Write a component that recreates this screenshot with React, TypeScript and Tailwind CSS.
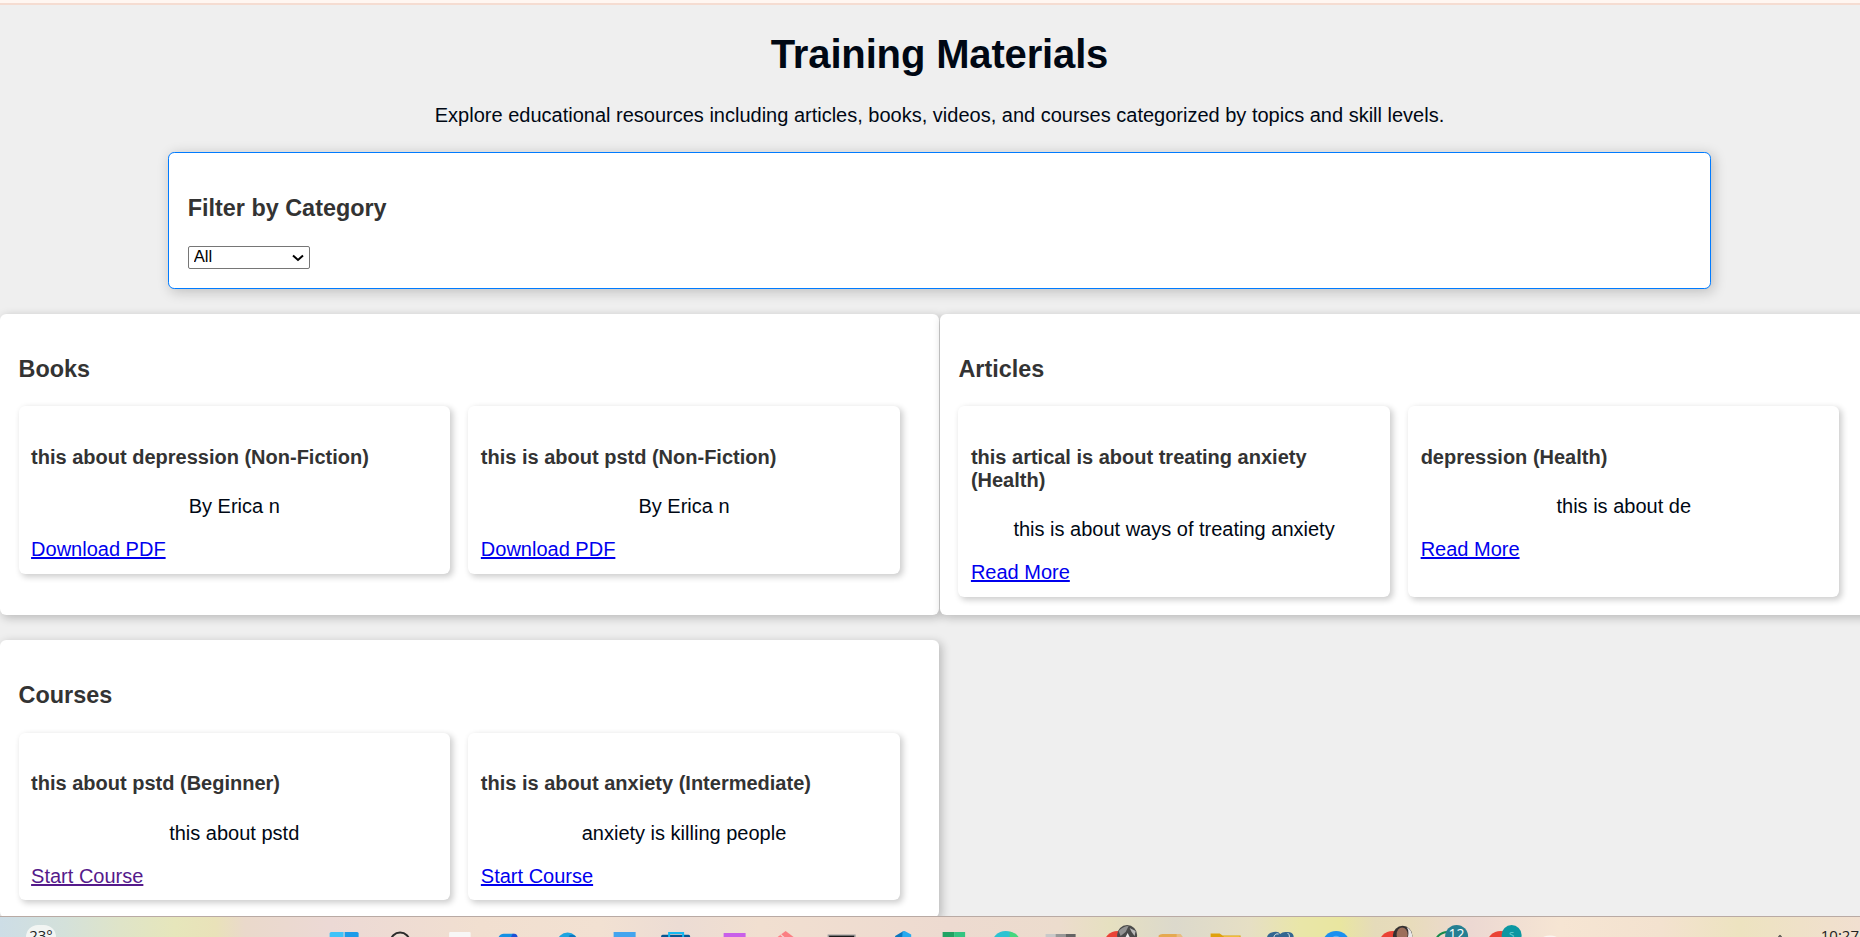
import React from "react";

type Item = { title: string; text: string; link: string; visited?: boolean };

const books: Item[] = [
  { title: "this about depression (Non-Fiction)", text: "By Erica n", link: "Download PDF" },
  { title: "this is about pstd (Non-Fiction)", text: "By Erica n", link: "Download PDF" },
];

const articles: Item[] = [
  { title: "this artical is about treating anxiety (Health)", text: "this is about ways of treating anxiety", link: "Read More" },
  { title: "depression (Health)", text: "this is about de", link: "Read More" },
];

const courses: Item[] = [
  { title: "this about pstd (Beginner)", text: "this about pstd", link: "Start Course", visited: true },
  { title: "this is about anxiety (Intermediate)", text: "anxiety is killing people", link: "Start Course" },
];

function Card({ item }: { item: Item }) {
  return (
    <article className="w-[431.25px] shrink-0 rounded-[6.25px] bg-white p-[12.5px] shadow-[2.5px_2.5px_6.25px_rgba(0,0,0,0.2)]">
      <h4 className="mt-[27px] mb-[26.6px] leading-[23px] font-bold text-[#333]">{item.title}</h4>
      <p className="mb-5 text-center leading-[23px]">{item.text}</p>
      <a
        href="#"
        className={
          item.visited
            ? "block w-fit leading-[23px] text-[#551a8b] underline"
            : "block w-fit leading-[23px] text-[#0000ee] underline"
        }
      >
        {item.link}
      </a>
    </article>
  );
}

function Section({ title, items }: { title: string; items: Item[] }) {
  return (
    <section className="rounded-[6.25px] bg-white px-[18.6px] pt-[18.75px] pb-[18.3px] shadow-[2.5px_2.5px_10px_rgba(0,0,0,0.22)]">
      <h3 className="my-[23.4px] text-[23.4px] leading-[27px] font-bold text-[#333]">{title}</h3>
      <div className="flex gap-[18.5px]">
        {items.map((item) => (
          <Card key={item.title} item={item} />
        ))}
      </div>
    </section>
  );
}

/* Taskbar icons, drawn around the centre of their slot. */
const icons: React.ReactNode[] = [
  <g key="start">
    <path d="M-14 17.5Q-14 16-12.5 16H0V32H-14Z" fill="#40c3f8" />
    <path d="M1 16H13.500Q15 16 15 17.500V32H1Z" fill="#1c9be9" />
  </g>,
  <circle key="search" cx="0.500" cy="26" r="9.500" fill="none" stroke="#2b2b2b" strokeWidth="2" />,
  <rect key="task" x="-5.500" y="16" width="21.500" height="16" rx="1" fill="#f8f7f6" />,
  <g key="copilot">
    <path d="M-11 21Q-9 17.700-6 17.700H4V24H-11Z" fill="#1590e4" />
    <path d="M0 24L3 17.700H5Q8 17.700 8.500 24Z" fill="#1d4fd6" />
  </g>,
  <g key="edge">
    <circle cx="3" cy="27" r="10.500" fill="#1ea4e0" />
    <path d="M4 20Q9 17 12 22H6Z" fill="#0c76bf" />
  </g>,
  <rect key="notes" x="-7" y="16" width="22" height="16" fill="#43a4ee" />,
  <g key="store">
    <rect x="-14.500" y="18.800" width="29" height="14" rx="1.500" fill="#075591" />
    <path d="M-6.500 22V17H7.500V22" fill="none" stroke="#16b9f2" strokeWidth="2" />
  </g>,
  <rect key="vs" x="-7" y="17" width="22" height="16" rx="0.500" fill="#c95fe9" />,
  <g key="snip">
    <path d="M0 15L8 21H-8Z" fill="#fb7f83" />
    <path d="M-5 18.500L-1 22" stroke="#f6d6ce" strokeWidth="1.300" />
  </g>,
  <g key="terminal">
    <rect x="-14" y="18.500" width="28" height="8" fill="#9b9b9b" />
    <rect x="-12.500" y="19.700" width="25" height="8" fill="#1b1b1b" />
  </g>,
  <g key="code">
    <path d="M-1.500 20L7 15V32H-1.500Z" fill="#0b76bd" />
    <path d="M6 15.400L8 15L14.600 18.500V32H5Z" fill="#27aaf0" />
  </g>,
  <g key="sheets">
    <rect x="-9" y="16" width="11.500" height="16" fill="#21a363" />
    <rect x="2.500" y="16" width="11" height="16" fill="#34c481" />
  </g>,
  <g key="edge2">
    <circle cx="-1" cy="29" r="14" fill="#2cc3d2" />
    <path d="M3 15.600Q10 17 12.500 22H3Z" fill="#45d77f" />
  </g>,
  <g key="tiles">
    <rect x="-16" y="18" width="10" height="12" fill="#c9c9c9" />
    <rect x="-6" y="18" width="10" height="12" fill="#989898" />
    <rect x="4" y="18" width="10" height="12" fill="#646464" />
  </g>,
  <g key="chrome">
    <circle cx="0" cy="29" r="14" fill="#ea4335" />
    <circle cx="9.500" cy="19" r="10" fill="#4a4a4a" />
    <path d="M1 15Q6 10 11 10L8 16L3 20Z" fill="#929292" />
    <path d="M12 12L18 15L17 20L14 16Z" fill="#b8b8b8" />
    <path d="M8 21L10 17L12 21Z" fill="#ececec" />
  </g>,
  <g key="tan">
    <path d="M-14 19.500Q-13 18-10 18H6L9 21L-14 22Z" fill="#e5a951" />
    <path d="M4 18H8L11 22H4Z" fill="#e9bd80" />
  </g>,
  <g key="folder">
    <path d="M-17 17.500H-8L-5 19.500H13V32H-17Z" fill="#dfa10d" />
    <rect x="-4" y="20.500" width="16" height="8" fill="#ffd768" />
  </g>,
  <g key="postgres">
    <path d="M-16 24Q-16 17-9 16Q-4 15-2.500 18Q0 15.500 4 16Q10 15.500 11 20V24Z" fill="#336791" />
    <path d="M-9 22Q-8 17-4 18M5 17Q7 18 7 22" stroke="#dce6df" fill="none" strokeWidth="1" />
  </g>,
  <g key="blue">
    <circle cx="-2.500" cy="29" r="14" fill="#1b90f0" />
    <path d="M-6 21Q-2.500 18.500 1 21Z" fill="#5bb3f6" />
  </g>,
  <g key="chrome2">
    <circle cx="-1" cy="29" r="14" fill="#ea4335" />
    <circle cx="9" cy="19.500" r="9.700" fill="#343131" />
    <path d="M13 11Q19 14 18.500 22H14Q16 15 13 11Z" fill="#e9e7e8" />
    <ellipse cx="8.500" cy="18.500" rx="5.500" ry="7" fill="#9c6f5b" />
  </g>,
  <g key="whatsapp">
    <circle cx="-1" cy="29" r="13" fill="none" stroke="#158b4b" strokeWidth="2" />
    <circle cx="8" cy="20.500" r="11.500" fill="#257f92" />
    <text x="8" y="23.500" textAnchor="middle" fontSize="14" fill="#fff" fontFamily="Open Sans, sans-serif">12</text>
  </g>,
  <g key="chrome3">
    <circle cx="-3" cy="29" r="14" fill="#ea4335" />
    <circle cx="8" cy="19" r="10" fill="#0c97a2" />
    <text x="8" y="22" textAnchor="middle" fontSize="11" fill="#6ed4d8" fontFamily="Open Sans, sans-serif">s</text>
  </g>,
];

function Taskbar() {
  return (
    <footer className="flex h-[21px] w-full shrink-0 items-start overflow-hidden border-t border-[#b9aaa4] bg-[linear-gradient(90deg,#cddde6_0px,#d4e1da_65px,#dfe4c8_120px,#e6e6bb_175px,#e9e2b9_215px,#ead9cb_245px,#ecd9d5_330px,#f1dfd0_480px,#f2e1d2_600px,#ecdcd4_680px,#f1dfd0_760px,#eddad0_950px,#ecdccd_1060px,#e6e0c0_1110px,#dcd9cc_1175px,#e6dfc4_1250px,#e9e6a8_1300px,#e9e6a0_1340px,#e5dbba_1375px,#e8dcbb_1410px,#ecd8d2_1470px,#f6e5d3_1560px,#f3e2cf_1660px,#ede3c0_1740px,#f1dfd0_1860px)]">
      <div className="ml-[26px] mt-2 flex h-[29px] w-[30px] shrink-0 justify-center rounded-[12px] bg-[#f2f5f3] font-['Open_Sans',sans-serif] text-[15px] leading-[20px] text-[#222]">
        23°
      </div>
      <div className="ml-[260.400px] -mt-px flex shrink-0">
        {icons.map((icon, i) => (
          <svg key={i} viewBox="-27.62 0 55.24 21" className="h-[21px] w-[55.24px] shrink-0">
            {icon}
          </svg>
        ))}
      </div>
      <svg viewBox="0 0 260 21" className="-mt-px h-[21px] w-[260px] shrink-0">
        <ellipse cx="18" cy="23" rx="8" ry="3.500" fill="#fbf6f0" />
        <path d="M246.500 21L248 19.500L249.500 21" fill="none" stroke="#444" strokeWidth="1.200" />
      </svg>
      <div className="ml-auto mt-2 shrink-0 pr-px font-['Open_Sans',sans-serif] text-[15px] leading-[20px] whitespace-nowrap text-[#222]">10:27</div>
    </footer>
  );
}

export default function App() {
  return (
    <div className="flex h-[937px] w-full flex-col overflow-hidden bg-[#efefef] font-['Liberation_Sans',Arial,sans-serif] text-[20px] text-[#000814]">
      <div className="h-[5px] shrink-0 border-b-2 border-[#f5dcd1] bg-[#fff6f1]" />
      <main className="min-h-0 w-[1879px] flex-1 overflow-hidden">
        <h1 className="mt-[26.8px] text-center text-[40px] leading-[45px] font-bold tracking-[-0.15px]">Training Materials</h1>
        <p className="mt-[26.8px] text-center leading-[23px]">
          Explore educational resources including articles, books, videos, and courses categorized by topics and skill levels.
        </p>
        <div className="mx-auto mt-[25px] h-[137px] w-[1543px] rounded-[6.25px] border border-[#007bff] bg-white px-[18.75px] pt-[18.75px] shadow-[2.5px_2.5px_12.5px_rgba(0,0,0,0.2)]">
          <h3 className="mt-[23.4px] mb-[24.2px] text-[23.4px] leading-[27px] font-bold text-[#333]">Filter by Category</h3>
          <div className="relative h-[23px] w-[122px]">
            <select className="block h-[23px] w-[122px] appearance-none rounded-[2px] border border-[#767676] bg-white pl-[5px] text-[16.670px] leading-[20px] text-black">
              <option>All</option>
              <option>Books</option>
              <option>Articles</option>
              <option>Courses</option>
            </select>
            <svg viewBox="0 0 12 8" className="pointer-events-none absolute top-2 right-[6px] h-2 w-3">
              <path d="M1 1.500L6 6L11 1.500" fill="none" stroke="#000" strokeWidth="2" />
            </svg>
          </div>
        </div>
        <div className="mt-[25px] grid grid-cols-[939px_939px] gap-x-[0.8px] gap-y-[25px]">
          <Section title="Books" items={books} />
          <Section title="Articles" items={articles} />
          <Section title="Courses" items={courses} />
        </div>
      </main>
      <Taskbar />
    </div>
  );
}
